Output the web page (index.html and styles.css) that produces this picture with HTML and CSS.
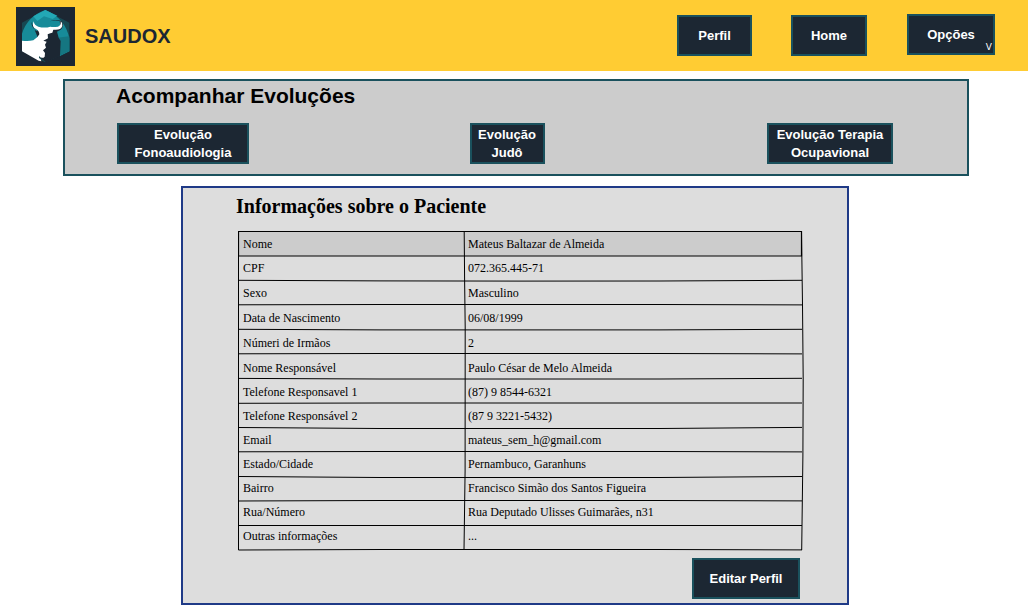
FILE: index.html
```html
<!DOCTYPE html>
<html lang="pt-BR">
<head>
<meta charset="utf-8">
<title>Saudox</title>
<link rel="stylesheet" href="styles.css">
</head>
<body>
<header class="topbar">
  <svg class="logo" viewBox="0 0 177 177" aria-hidden="true">
    <rect width="177" height="177" fill="#1c2733"/>
    <path d="M18 47 88 9 160 47V133L88 166 18 133Z" fill="#174852"/>
    <path d="M18 80Q34 28 88 9Q148 34 160 94V133L132 147 90 120 18 108Z" fill="#178b99"/>
    <path d="M52 28 88 9 124 26 110 36 84 28 64 42Z" fill="#23a8b5"/>
    <path d="M124 92 160 88V133L130 147Z" fill="#157681"/>
    <path d="M46 44Q47 64 62 72L72 66 104 67Q126 66 133 56L131 42Q118 38 102 43Q122 35 137 43Q146 57 134 68L123 74 128 92 134 102 132 146 90 166 72 150 72 108Z" fill="#1c2733"/>
    <path d="M53 43Q46 60 60 66Q70 72 70 82Q66 92 52 100Q36 104 18 101V133L68 161 76 163Q76 156 69 153L69 147Q78 157 86 149L87 138 81 130 90 122 87 113 92 104 82 101 96 94 95 82Q104 77 109 77L112 68Q134 71 139 57Q140 47 134 43Q136 56 126 59Q111 61 103 59Q86 64 67 59Q55 56 53 43Z" fill="#fff"/>
  </svg>
  <span class="brand">SAUDOX</span>
  <nav class="nav">
    <button class="btn perfil">Perfil</button>
    <button class="btn home">Home</button>
    <button class="btn options">Opções<span class="caret">V</span></button>
  </nav>
</header>
<section class="progress">
  <h1 class="progress-title">Acompanhar Evoluções</h1>
  <div class="progress-actions">
    <button class="btn speech">Evolução<br>Fonoaudiologia</button>
    <button class="btn judo">Evolução<br>Judô</button>
    <button class="btn therapy">Evolução Terapia<br>Ocupavional</button>
  </div>
</section>
<section class="patient">
  <h2 class="patient-title">Informações sobre o Paciente</h2>
  <div class="sheet">
    <svg class="rules" viewBox="0 0 567 320" aria-hidden="true">
      <path class="head" d="M.5.5H563.5V25H.5Z"/>
      <path d="M.5 .5V319M226.2 .5 226.6 48 227.2 96 227.1 240 226 319M563.5 .5 564.5 74 565.2 148 564.9 225 563.7 319"/>
      <path d="M.5 49.3 142 49.9 282 50.1 422 50 564 49.3M.5 73.8 142 73.5H422L564 73.9M.5 98.3 142 98.9H422L564 98.3M.5 122.8 142 122.5H422L564 122.9M.5 147.4 142 148H422L564 147.3M.5 172.3 142 172H564M.5 196.5 142 197.5H422L564 196.4M.5 220.8 142 220.5H422L564 220.9M.5 245.5 142 246.5H422L564 245.5M.5 270 142 269.5H422L564 269.9M.5 294.5H564M.5 319 142 318.5H422L564 318.9"/>
    </svg>
    <dl class="fields">
      <dt>Nome</dt><dd>Mateus Baltazar de Almeida</dd>
      <dt>CPF</dt><dd>072.365.445-71</dd>
      <dt>Sexo</dt><dd>Masculino</dd>
      <dt>Data de Nascimento</dt><dd>06/08/1999</dd>
      <dt>Númeri de Irmãos</dt><dd>2</dd>
      <dt>Nome Responsável</dt><dd>Paulo César de Melo Almeida</dd>
      <dt>Telefone Responsavel 1</dt><dd>(87) 9 8544-6321</dd>
      <dt>Telefone Responsável 2</dt><dd>(87 9 3221-5432)</dd>
      <dt>Email</dt><dd>mateus_sem_h@gmail.com</dd>
      <dt>Estado/Cidade</dt><dd>Pernambuco, Garanhuns</dd>
      <dt>Bairro</dt><dd>Francisco Simão dos Santos Figueira</dd>
      <dt>Rua/Número</dt><dd>Rua Deputado Ulisses Guimarães, n31</dd>
      <dt>Outras informações</dt><dd>...</dd>
    </dl>
  </div>
  <button class="btn edit">Editar Perfil</button>
</section>
</body>
</html>
```
FILE: styles.css
```css
* { box-sizing: border-box; }
body {
  margin: 0;
  height: 608px;
  overflow: hidden;
  background: #fff;
  color: #000;
  font-family: "Liberation Sans", Arial, sans-serif;
}
.topbar {
  display: flex;
  height: 71px;
  padding: 7px 33px 0 16px;
  background: #ffcc33;
}
.logo { width: 59px; height: 59px; flex: none; }
.brand {
  margin-left: 10px;
  font-size: 20px;
  font-weight: bold;
  line-height: 58px;
  color: #1c2733;
}
.nav { display: flex; align-items: flex-start; margin-left: auto; padding-top: 8px; }
.btn {
  position: relative;
  height: 41px;
  padding: 0;
  border: 2px solid #1a515d;
  border-radius: 0;
  background: #1c2733;
  color: #fff;
  font: bold 13px/18px "Liberation Sans", Arial, sans-serif;
}
.perfil { width: 75px; }
.home { width: 76px; margin-left: 39px; }
.options { width: 88px; margin: -1px 0 0 40px; }
.caret {
  position: absolute;
  right: 1px;
  bottom: 0;
  font: 9px/11px "DejaVu Sans", sans-serif;
}
.progress {
  width: 906px;
  height: 97px;
  margin: 8px 0 0 63px;
  padding: 2px 74px 0 52px;
  border: 2px solid #1a515d;
  background: #ccc;
}
.progress-title { margin: 0 0 14px -1px; font-size: 21px; line-height: 26px; }
.progress-actions { display: flex; justify-content: space-between; }
.speech { width: 132px; }
.judo { width: 75px; margin-left: -2px; }
.therapy { width: 126px; }
.patient {
  display: flex;
  flex-direction: column;
  width: 668px;
  height: 419px;
  margin: 10px 0 0 181px;
  padding: 6px 47px 0 55px;
  border: 2px solid #1f3a87;
  background: #ddd;
  font-family: "Liberation Serif", "Times New Roman", serif;
}
.patient-title { margin: 0 0 13px -2px; font-size: 20px; line-height: 24px; }
.sheet { display: grid; height: 320px; }
.rules { grid-area: 1 / 1; width: 567px; height: 320px; fill: none; stroke: #000; stroke-width: 1; }
.head { fill: #ccc; stroke-width: 1.2; }
.fields {
  grid-area: 1 / 1;
  display: grid;
  grid-template-columns: 225px 1fr;
  grid-template-rows: 24px repeat(4, 25px) repeat(8, 24px);
  margin: 0;
  padding: 1px 0 0 5px;
  font-size: 12px;
  line-height: 24px;
}
.fields dt, .fields dd { margin: 0; white-space: nowrap; }
.edit { width: 108px; margin: 7px 0 0 auto; flex: none; }
```
